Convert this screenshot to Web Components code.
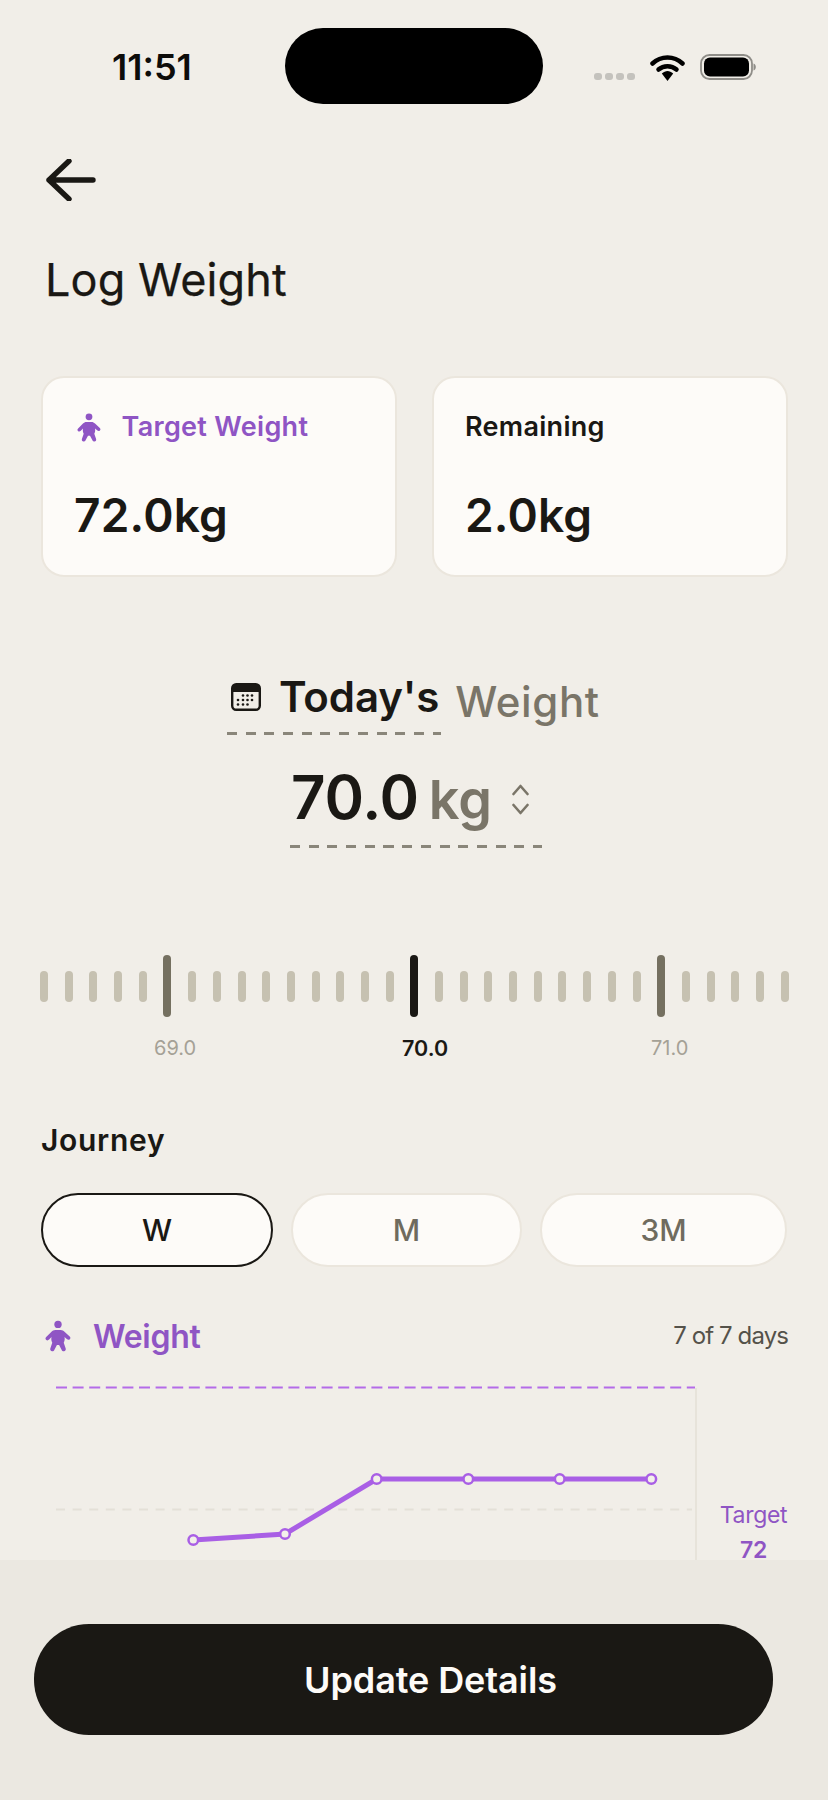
<!DOCTYPE html>
<html><head><meta charset="utf-8">
<style>
html,body{margin:0;padding:0;background:#f1eee8}
body{width:828px;height:1800px;overflow:hidden;font-family:Inter,"Noto Sans",sans-serif;color:#1a1814}
app-screen{display:flex;flex-direction:column;width:828px;height:1800px}
</style></head><body>
<app-screen>
  <status-bar></status-bar>
  <page-header>Log Weight</page-header>
  <stat-row>
    <stat-card label="Target Weight" value="72.0kg" accent></stat-card>
    <stat-card label="Remaining" value="2.0kg"></stat-card>
  </stat-row>
  <today-weight></today-weight>
  <tick-ruler></tick-ruler>
  <journey-tabs></journey-tabs>
  <weight-chart></weight-chart>
  <footer-cta>Update Details</footer-cta>
</app-screen>
<script>
const PERSON=`<svg viewBox="0 0 24 29" width="100%" height="100%"><circle cx="12" cy="3.800" r="3.400" fill="currentColor"/><path fill="currentColor" d="M9.500 9h5c1.500 0 2.500.7 3.500 1.600l4.800 4.400c.9.900.9 2-.1 2.700-.8.600-1.800.4-2.600-.4L18 15.500c.4 2 .2 3.700-.7 5.200l1.800 5.400c.4 1.300-.4 2.400-1.600 2.500-1 .1-1.800-.5-2.200-1.500L13 22.800h-2l-2.300 4.300c-.4 1-1.200 1.600-2.200 1.500-1.200-.1-2-1.200-1.600-2.500l1.800-5.400c-.9-1.500-1.100-3.200-.7-5.200l-2.200 2.300c-.8.800-1.800 1-2.600.4-1-.7-1-1.800-.1-2.700L6 10.600C7 9.700 8 9 9.500 9z"/></svg>`;
function def(name,css,html,init){
  customElements.define(name,class extends HTMLElement{
    constructor(){super();const r=this.attachShadow({mode:'open'});
      r.innerHTML=`<style>${css}</style>`+(typeof html==='function'?html(this):html);}
    connectedCallback(){if(init)init(this)}
  });
}
def('status-bar',`:host{display:flex;align-items:flex-start;height:130px;flex:none;box-sizing:border-box;padding-top:28px;padding-left:112px}
.t{font:600 36px/1 Inter,sans-serif;width:173px;margin-top:21px;color:#0d0c0a}
.i{width:258px;height:76px;border-radius:38px;background:#000;flex:none}
.d{display:flex;gap:3px;margin:45px 15px 0 51px}.d b{width:8px;height:7px;border-radius:3px;background:#c4c2bd}
.w{margin:26px 15px 0 0;display:block}.b{margin-top:26px;display:block}`,
`<span class="t">11:51</span><span class="i"></span><span class="d"><b></b><b></b><b></b><b></b></span>
<svg class="w" width="35" height="27" viewBox="0 0 35 27"><path d="M2.500 9.500C11 1.500 24 1.500 32.500 9.500" fill="none" stroke="#000" stroke-width="4.500" stroke-linecap="round"/><path d="M8.500 15.500C13.500 11 21.500 11 26.500 15.500" fill="none" stroke="#000" stroke-width="4.500" stroke-linecap="round"/><path d="M11.800 19.600C15.500 16 19.500 16 23.200 19.600L17.500 27z" fill="#000"/></svg>
<svg class="b" width="56" height="26" viewBox="0 0 56 26"><rect x="1" y="1" width="51" height="24" rx="8.500" fill="none" stroke="#8f8d88" stroke-width="1.800"/><rect x="4" y="3.500" width="45" height="19" rx="6" fill="#000"/><path d="M53.500 9.500c1.500.5 2.300 1.800 2.300 3.500s-.8 3-2.300 3.500z" fill="#8f8d88"/></svg>`);
def('page-header',`:host{display:block;flex:none;height:246px;box-sizing:border-box;padding-left:46px}
svg{display:block;margin-top:29px}
h1{margin:52px 0 0 -1px;font:400 45px/54px Inter,sans-serif;letter-spacing:.1px;color:#1a1814;height:54px;-webkit-text-stroke:.25px #1a1814}`,
`<svg width="50" height="42" viewBox="0 0 50 42"><path d="M47 21H3M23 2 3 21l20 19" fill="none" stroke="#1a1814" stroke-width="5.400" stroke-linecap="round" stroke-linejoin="round"/></svg><h1><slot></slot></h1>`);
def('stat-row',`:host{display:flex;gap:35px;padding:0 41px;flex:none}`,`<slot></slot>`);
def('stat-card',`:host{display:block;box-sizing:border-box;height:201px;border-radius:23px;background:#fdfbf8;border:2px solid #ebe6dd;padding:31px 31px 0 31px;width:356px;flex:none}
.l{display:flex;align-items:center;gap:21px;height:36px;font:600 27px/36px Inter,sans-serif;letter-spacing:.3px;color:#1a1814}
:host([accent]) .l{color:#8f55c4}
.ic{width:24px;height:29px;flex:none;color:#8f55c4;margin-left:2.500px}
.v{margin-top:42px;font:600 46px/56px Inter,sans-serif;letter-spacing:.2px;color:#1a1814}`,
h=>`<div class="l">${h.hasAttribute('accent')?`<span class="ic">${PERSON}</span>`:''}<span>${h.getAttribute('label')}</span></div><div class="v">${h.getAttribute('value')}</div>`);
def('today-weight',`:host{display:flex;flex-direction:column;flex:none;height:378px;box-sizing:border-box;padding-top:94px;align-items:flex-start}
.r1{display:flex;align-items:flex-start;margin-left:227px;height:56px}
.cal{margin:12px 18px 0 4px;display:block}
.a{font:600 42px/52px Inter,sans-serif;letter-spacing:-.1px;color:#1a1814}
.b{font:500 42px/52px Inter,sans-serif;letter-spacing:.6px;color:#7a7568;margin:5px 0 0 16px}
.dash{height:3px;background:repeating-linear-gradient(90deg,#8a867a 0 10px,transparent 10px 18.700px)}
.d1{width:214px;margin-left:227px;margin-top:5px}
.r2{display:flex;align-items:flex-start;margin-left:291px;margin-top:24px;height:76px}
.n{font:600 60px/76px Inter,sans-serif;letter-spacing:-.2px;color:#1a1814}
.k{font:600 54px/76px Inter,sans-serif;color:#7a7568;margin:3px 0 0 10px}
.ch{display:block;margin:25px 0 0 20px}
.d2{width:252px;margin-left:290px;margin-top:10px}`,
`<div class="r1"><svg class="cal" width="30" height="28" viewBox="0 0 30 28"><rect x="1.200" y="1.200" width="27.600" height="25.600" rx="4" fill="none" stroke="#1a1814" stroke-width="2.400"/><path d="M1.500 9V5a4 4 0 0 1 4-4h19a4 4 0 0 1 4 4v4z" fill="#1a1814"/><g fill="#1a1814"><circle cx="12" cy="12.500" r="1.300"/><circle cx="16.500" cy="12.500" r="1.300"/><circle cx="21" cy="12.500" r="1.300"/><circle cx="7" cy="17" r="1.300"/><circle cx="12" cy="17" r="1.300"/><circle cx="16.500" cy="17" r="1.300"/><circle cx="21" cy="17" r="1.300"/><circle cx="7" cy="21.500" r="1.300"/><circle cx="12" cy="21.500" r="1.300"/><circle cx="16.500" cy="21.500" r="1.300"/></g></svg><span class="a">Today's</span><span class="b">Weight</span></div>
<div class="dash d1"></div>
<div class="r2"><span class="n">70.0</span><span class="k">kg</span><svg class="ch" width="17" height="31" viewBox="0 0 17 31"><path d="M1.500 10 8.500 2l7 8M1.500 21l7 8 7-8" fill="none" stroke="#7a7568" stroke-width="2.600" stroke-linecap="round" stroke-linejoin="round"/></svg></div>
<div class="dash d2"></div>`);
def('tick-ruler',`:host{display:block;flex:none;height:166px;padding:0 39px 0 40px}
.t{display:flex;justify-content:space-between;align-items:center;height:62px}
.t i{display:block;width:8px;height:31px;border-radius:4px;background:#c6c1b1}
.t i.m{height:62px;background:#757060}.t i.c{height:62px;background:#1a1814}
.l{display:flex;margin-top:17px;font:400 20px/28px Inter,sans-serif;color:#a5a196}
.l span{flex:none}.l span:first-child{margin-left:114px;width:248px}.l span:nth-child(2){width:249px}
.l .c{color:#1a1814;font-weight:600;font-size:21.500px}`,
()=>{let s='';for(let k=0;k<31;k++){s+=`<i class="${k==15?'c':(k==5||k==25)?'m':''}"></i>`}
return `<div class="t">${s}</div><div class="l"><span>69.0</span><span class="c">70.0</span><span>71.0</span></div>`});
def('journey-tabs',`:host{display:block;flex:none;height:189px}
h2{margin:0 0 0 41px;font:600 30px/38px Inter,sans-serif;letter-spacing:.7px;color:#1a1814;height:38px}
.r{display:flex;gap:18px;padding:0 41px;margin-top:34px}
.b{flex:none;width:231px;height:74px;box-sizing:border-box;border-radius:37px;background:#fdfbf8;border:2px solid #ebe6dd;display:flex;align-items:center;justify-content:center;font:450 30px/1 Inter,sans-serif;color:#6f6b5e}
.b.on{border:2px solid #1a1814;color:#1a1814;width:232px}
.b.w{width:247px}`,
`<h2>Journey</h2><div class="r"><span class="b on">W</span><span class="b">M</span><span class="b w">3M</span></div>`);
def('weight-chart',`:host{display:block;flex:1;min-height:0;position:relative}
.h{display:flex;align-items:center;padding:5px 40px 0 45px;height:44px}
.ic{width:26px;height:32px;color:#8f55c4;flex:none;margin-top:-2px}
.w{font:600 32px/44px Inter,sans-serif;color:#8f55c4;margin-left:22px;letter-spacing:-.3px}
.s{margin-left:auto;font:400 24px/44px Inter,sans-serif;color:#55524a;letter-spacing:-.9px;margin-top:-2px}
svg.c{position:absolute;left:0;top:0}
.tg{position:absolute;left:700px;top:193px;width:107px;text-align:center;color:#8f55c4;font:400 23px/24px Inter,sans-serif;letter-spacing:-.3px}
.tg b{display:block;font-weight:600;line-height:20px;margin-top:13px}`,
`<div class="h"><span class="ic">${PERSON}</span><span class="w">Weight</span><span class="s">7 of 7 days</span></div>
<svg class="c" width="828" height="250" viewBox="0 1310 828 250"><line x1="696" y1="1388" x2="696" y2="1560" stroke="#e7e3da" stroke-width="2"/>
<line x1="56" y1="1387.500" x2="695" y2="1387.500" stroke="#b46be8" stroke-width="2" stroke-dasharray="11 5.600"/>
<line x1="56" y1="1509.500" x2="692" y2="1509.500" stroke="#e4e0d7" stroke-width="2" stroke-dasharray="9 7.600"/>
<polyline points="193.300,1540 285,1534 376.700,1479 468.300,1479 559.700,1479 651.300,1479" fill="none" stroke="#a95fe5" stroke-width="5"/>
<g fill="#f3f0ea" stroke="#a95fe5" stroke-width="2.500"><circle cx="193.300" cy="1540" r="4.800"/><circle cx="285" cy="1534" r="4.800"/><circle cx="376.700" cy="1479" r="4.800"/><circle cx="468.300" cy="1479" r="4.800"/><circle cx="559.700" cy="1479" r="4.800"/><circle cx="651.300" cy="1479" r="4.800"/></g></svg>
<div class="tg">Target<b>72</b></div>`);
def('footer-cta',`:host{display:block;flex:none;height:240px;background:#ebe8e1;box-sizing:border-box;padding:64px 0 0 34px;position:relative}
.b{width:739px;height:111px;border-radius:55px;background:#1a1814;color:#fdfbf8;display:flex;align-items:center;justify-content:center;box-sizing:border-box;padding-left:54px;font:600 36px/1 Inter,sans-serif;letter-spacing:-.1px}`,
`<div class="b"><slot></slot></div>`);
</script>
</body></html>
